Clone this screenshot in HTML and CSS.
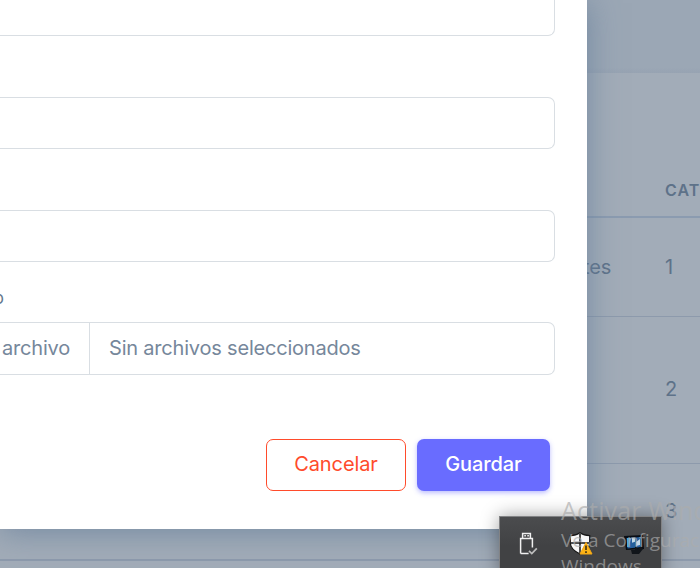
FILE: index.html
```html
<!DOCTYPE html>
<html lang="es">
<head>
<meta charset="utf-8">
<title>Categorías</title>
<link rel="stylesheet" href="styles.css">
</head>
<body>
<div class="screen">
  <main class="page">
    <div class="topbar"></div>
    <section class="card">
      <div class="row head"><span></span><span class="cat">CATEGORÍA</span></div>
      <div class="row first"><span class="name">Guantes</span><span class="num">1</span></div>
      <div class="row second"><span></span><span class="num">2</span></div>
      <div class="row third"><span></span><span class="num">3</span></div>
      <div class="row"></div>
    </section>
  </main>

  <div class="modal">
    <form class="form">
      <div class="field short"></div>
      <div class="field"></div>
      <div class="field"></div>
      <div class="label"><span>Archivo</span></div>
      <div class="file">
        <div class="choose"><span>Seleccionar archivo</span></div>
        <div class="chosen"><span>Sin archivos seleccionados</span></div>
      </div>
      <div class="actions">
        <button type="button" class="btn cancel"><span>Cancelar</span></button>
        <button type="button" class="btn save"><span>Guardar</span></button>
      </div>
    </form>
  </div>

  <div class="tray">
    <svg class="icon usb" viewBox="0 0 20 24" fill="none" stroke="#f0f0f0" stroke-width="1.5">
      <path d="M4.600 6V1.600h7.800V6M2.600 21.400V6.600h11.800v9M2.600 21.400h8"/>
      <path d="M6.300 3.800h1.600M9.300 3.800h1.600" stroke-width="1.500"/>
      <path d="M11 18.800l2.800 2.800 5-5.200" stroke="#bdbdbd" stroke-width="1.700"/>
    </svg>
    <svg class="icon shield" viewBox="0 0 24 24">
      <path d="M11 .8C8 3 5 3.700 1.300 3.700v7c0 5 4 8.500 9.700 11.300 5.700-2.800 9.700-6.300 9.700-11.300v-7C17 3.700 14 3 11 .8z" fill="#f7f7f7" stroke="#161616" stroke-width="1.200"/>
      <path d="M11 2v19M2 11h18" stroke="#161616" stroke-width="1.500"/>
      <path d="M17 10.500l6 11.500H11z" fill="#fcb316" stroke="#f3a714" stroke-linejoin="round"/>
      <path d="M17 13.500v4.500M17 19.300v1.700" stroke="#2b2415" stroke-width="1.500"/>
    </svg>
    <svg class="icon monitor" viewBox="0 0 24 24">
      <path d="M1 4l19-1 1 14-18 1z" fill="#080d14"/>
      <path d="M3.500 6l15-1v10l-14 1.500z" fill="#245f9e"/>
      <path d="M4 6h4l-2 9H4z" fill="#4ba5e5"/>
      <path d="M9 6l3-.3v4l-3 1zM13 10l4-3v6l-4 1z" fill="#c3d9e9"/>
      <path d="M8 18h4v-4l3 3 3-3 2 3-4 5H9z" fill="#11151a"/>
    </svg>
  </div>

  <div class="watermark">
    <div class="title">Activar Windows</div>
    <div class="hint">Ve a Configuración para activar</div>
    <div class="hint">Windows.</div>
  </div>
</div>
</body>
</html>
```
FILE: styles.css
```css
* { box-sizing: border-box; }
body { margin: 0; font-family: Inter, "Liberation Sans", sans-serif; }
.screen { position: relative; width: 700px; height: 568px; overflow: hidden; background: #9ba7b5; }

.page { display: flex; flex-direction: column; height: 568px; }
.topbar { flex: 0 0 73px; background: linear-gradient(#9ba7b5 92%, #97a3b2); }
.card { flex: 1; background: #a2acb8; color: #5e7289; font-size: 20px; overflow: hidden; }
.row { display: grid; grid-template-columns: 611px 1fr; column-gap: 54px; align-items: center; white-space: nowrap; border-bottom: 1px solid #8d9aac; }
.head { height: 145px; border-bottom: 2px solid #8b9bb0; align-items: end; padding-bottom: 16px; }
.cat { font-size: 16px; line-height: 20px; font-weight: 600; letter-spacing: 1px; }
.first { height: 99px; }
.second { height: 147px; padding-bottom: 2px; }
.third { height: 96px; padding-bottom: 1px; }
.name { text-align: right; letter-spacing: -.2px; }

.modal { position: absolute; left: 0; top: 0; width: 587px; height: 529px; background: #fff; box-shadow: 0 3px 30px rgba(100, 126, 153, .75); }
.form { display: flex; flex-direction: column; padding-right: 32px; }
.field { height: 52px; margin-bottom: 61px; border: 1px solid #d9dee3; border-left: 0; border-radius: 0 7px 7px 0; }
.field.short { height: 36px; border-top: 0; border-top-right-radius: 0; }
.field:nth-child(3) { margin-bottom: 24px; }
.label { display: flex; justify-content: flex-end; width: 4px; height: 24px; margin-bottom: 12px; color: #65788d; font-size: 17px; line-height: 24px; }
.file { display: flex; height: 53px; border: 1px solid #d9dee3; border-left: 0; border-radius: 0 7px 7px 0; color: #76879b; font-size: 20px; line-height: 50px; white-space: nowrap; }
.choose { display: flex; justify-content: flex-end; width: 90px; padding-right: 19px; border-right: 1px solid #d9dee3; letter-spacing: -.2px; }
.chosen { padding-left: 19px; letter-spacing: -.2px; }
.actions { display: flex; justify-content: flex-end; gap: 11px; margin-top: 64px; padding-right: 5px; }
.btn { height: 52px; padding: 0 0 2px; border-radius: 7px; font: 20px Inter, sans-serif; }
.cancel { width: 140px; border: 1px solid #ff4b2b; background: #fff; color: #ff4b2b; letter-spacing: -.1px; }
.save { width: 133px; border: 0; background: #696cff; color: #fff; font-weight: 500; letter-spacing: -.1px; box-shadow: 0 2px 5px rgba(105, 108, 255, .45); }

.tray { position: absolute; left: 499px; top: 516px; width: 163px; height: 60px; display: flex; padding: 15px 0 0 18px; border: 1px solid #828385; background: linear-gradient(#4b4c4e, #414244 50%); box-shadow: 0 0 17px rgba(0, 0, 0, .38); }
.icon { display: block; width: 24px; height: 24px; }
.usb { width: 20px; }
.shield { margin-left: 31px; }
.monitor { margin-left: 30px; }

.watermark { position: absolute; left: 561px; top: 493px; color: rgba(172, 172, 172, .68); font-family: "Open Sans", sans-serif; white-space: nowrap; }
.title { height: 34px; font-size: 25px; line-height: 34px; letter-spacing: .15px; }
.hint { height: 26px; font-size: 19px; line-height: 26px; }
```
